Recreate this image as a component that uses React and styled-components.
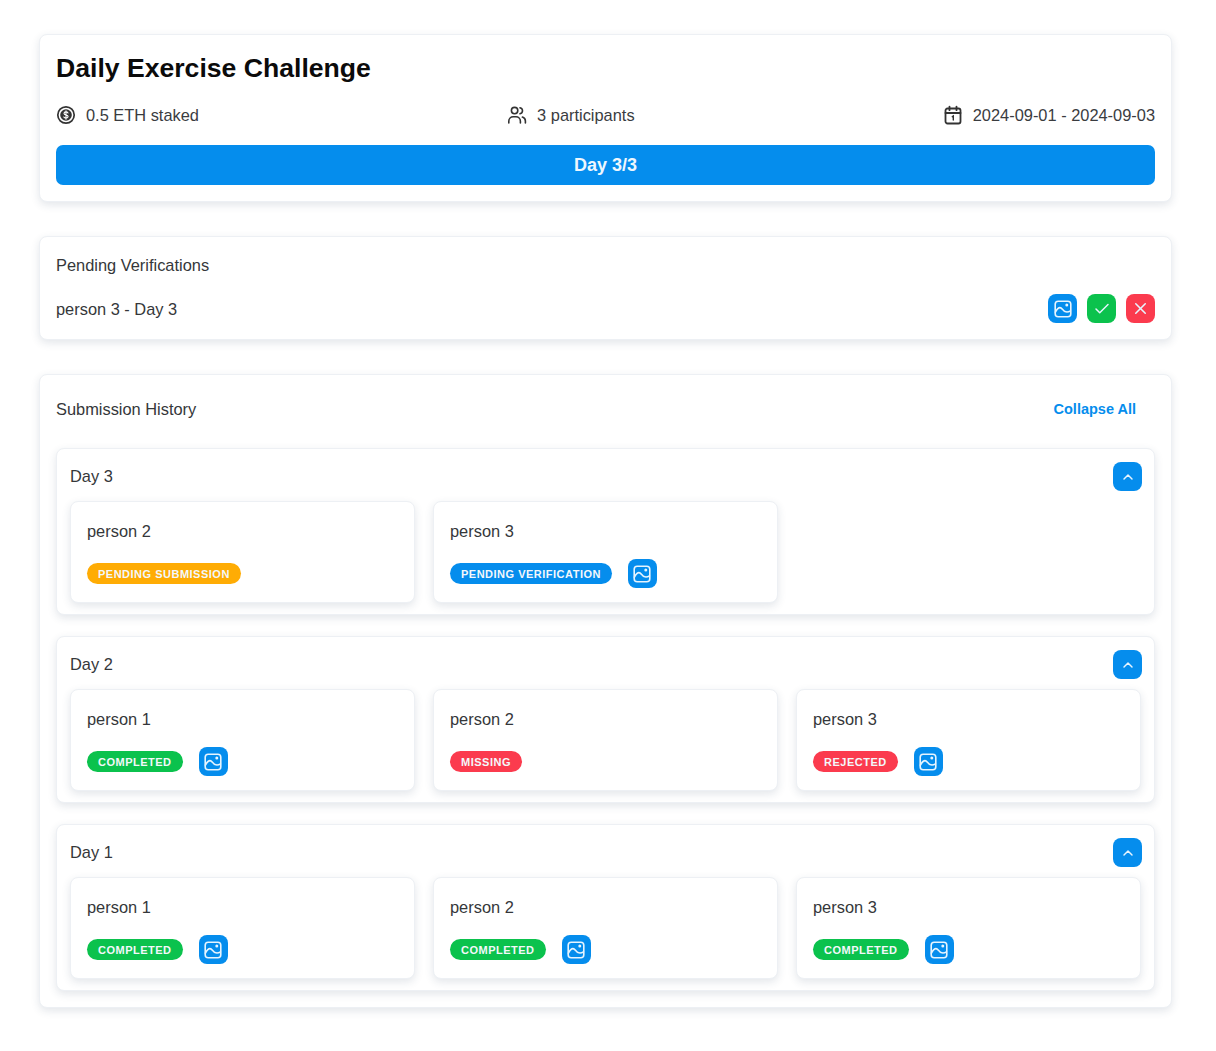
import styled, { createGlobalStyle } from 'styled-components';
import { Check, ChevronUp, X } from 'lucide-react';

const GlobalStyle = createGlobalStyle`
  html, body {
    margin: 0;
    padding: 0;
    background: #ffffff;
    font-family: "Liberation Sans", Arial, sans-serif;
    color: #2f3133;
  }
  * {
    box-sizing: border-box;
  }
`;

const colors = {
  blue: '#058ded',
  green: '#0bc24d',
  red: '#fb3b4e',
  orange: '#ffac04',
};

const Page = styled.div`
  width: 1216px;
  height: 1051px;
  padding: 34px 44px 0 39px;
  display: flex;
  flex-direction: column;
  gap: 34px;
`;

const Card = styled.section`
  background: #fff;
  border: 1px solid #edf0f4;
  border-radius: 8px;
  padding: ${(p) => p.$padding || '16px'};
  box-shadow: 0 3px 9px rgba(40, 60, 90, 0.13);
`;

const Title = styled.h1`
  margin: 0;
  height: 36px;
  line-height: 35px;
  font-size: 26.6px;
  font-weight: 700;
  color: #0b0b0b;
`;

const MetaRow = styled.div`
  margin-top: 13px;
  height: 30px;
  display: flex;
  align-items: center;
  justify-content: space-between;
`;

const Meta = styled.div`
  display: flex;
  align-items: center;
  gap: 10px;
  font-size: 16.4px;
  color: #3a3c3f;
`;

const ProgressBar = styled.div`
  margin-top: 15px;
  height: 40px;
  border-radius: 7px;
  background: ${colors.blue};
  color: #eef7fe;
  font-size: 18px;
  font-weight: 700;
  display: flex;
  align-items: center;
  justify-content: center;
`;

const SectionLabel = styled.div`
  font-size: 16.4px;
  line-height: 20px;
  color: #35373a;
`;

const DayLabel = styled(SectionLabel)`
  margin-bottom: 2px;
`;

const PendingRow = styled.div`
  margin-top: 19px;
  display: flex;
  align-items: center;
  justify-content: space-between;
`;

const ButtonGroup = styled.div`
  display: flex;
  gap: 10px;
`;

const IconButton = styled.button`
  width: 29px;
  height: 29px;
  padding: 0;
  border: none;
  border-radius: 8px;
  background: ${(p) => p.$color || colors.blue};
  color: #e6f4fe;
  display: flex;
  align-items: center;
  justify-content: center;
  flex-shrink: 0;
`;

const HistoryHeader = styled.div`
  height: 36px;
  padding-right: 19px;
  display: flex;
  align-items: center;
  justify-content: space-between;
`;

const CollapseAll = styled.span`
  font-size: 14.5px;
  font-weight: 700;
  color: ${colors.blue};
`;

const DayList = styled.div`
  margin-top: 21px;
  display: flex;
  flex-direction: column;
  gap: 21.2px;
`;

const DayHeader = styled.div`
  height: 29px;
  margin-right: -1px;
  display: flex;
  align-items: center;
  justify-content: space-between;
`;

const DayGrid = styled.div`
  margin-top: 10px;
  display: grid;
  grid-template-columns: repeat(3, 1fr);
  gap: 18px;
`;

const PersonCard = styled(Card)`
  height: 102px;
  padding: 20px 16px 0;
`;

const PersonName = styled.div`
  font-size: 16.4px;
  line-height: 19px;
  color: #35373a;
`;

const StatusRow = styled.div`
  margin-top: 18px;
  min-height: 29px;
  display: flex;
  align-items: center;
  gap: 16px;
`;

const Badge = styled.span`
  height: 21px;
  padding: 0 11px;
  border-radius: 11px;
  background: ${(p) => p.$color};
  color: #f3f8fb;
  font-size: 11px;
  font-weight: 700;
  letter-spacing: 0.5px;
  display: inline-flex;
  align-items: center;
`;

const DollarIcon = () => (
  <svg width="20" height="20" viewBox="0 0 20 20" fill="none">
    <circle cx="10" cy="10" r="8.2" stroke="#333" strokeWidth="1.7" />
    <circle cx="10" cy="10" r="5.8" fill="#333" />
    <path d="M12 7.900c-.4-.7-1.100-1-2-1-1.100 0-2 .5-2 1.500 0 2.200 4.100 1 4.100 3.200 0 1-.9 1.500-2.100 1.500-1 0-1.800-.4-2.200-1.100M10 5.800v8.400" stroke="#fff" strokeWidth="1.1" strokeLinecap="round" />
  </svg>
);

const UsersIcon = () => (
  <svg width="20" height="20" viewBox="0 0 20 20" fill="none" stroke="#333" strokeWidth="1.6" strokeLinecap="round">
    <circle cx="7.600" cy="5.600" r="3.200" />
    <path d="M1.800 18v-1.800c0-2.600 2-4.400 4.400-4.400h2.800c2.400 0 4.400 1.800 4.400 4.400V18" />
    <path d="M13 2.700c1.500.4 2.500 1.600 2.500 3s-1 2.600-2.500 3" />
    <path d="M15.400 12.100c1.800.5 3 2.100 3 4V18" />
  </svg>
);

const CalendarIcon = () => (
  <svg width="20" height="20" viewBox="0 0 20 20" fill="none" stroke="#333" strokeWidth="1.800" strokeLinecap="round">
    <rect x="2.500" y="3.500" width="15" height="15" rx="2" />
    <path d="M6.500 1.600v3.600M13.500 1.600v3.600M2.500 8h15" />
    <path d="M9.300 11.700l1-.6v4" strokeWidth="1.400" />
  </svg>
);

const ImageIcon = () => (
  <svg width="20" height="20" viewBox="0 0 20 20" fill="none" stroke="currentColor" strokeWidth="1.600" strokeLinecap="round" strokeLinejoin="round">
    <rect x="2.200" y="2.200" width="15.600" height="15.600" rx="3" />
    <path d="M2.400 13.200c1.400-2.800 3-4.600 4.600-4.600 1.800 0 3 3 5 4 2 .9 3.800.3 5.400-.6" />
    <circle cx="13.800" cy="6" r="0.700" />
  </svg>
);

const days = [
  {
    label: 'Day 3',
    entries: [
      { name: 'person 2', status: 'PENDING SUBMISSION', color: colors.orange },
      { name: 'person 3', status: 'PENDING VERIFICATION', color: colors.blue, image: true },
    ],
  },
  {
    label: 'Day 2',
    entries: [
      { name: 'person 1', status: 'COMPLETED', color: colors.green, image: true },
      { name: 'person 2', status: 'MISSING', color: colors.red },
      { name: 'person 3', status: 'REJECTED', color: colors.red, image: true },
    ],
  },
  {
    label: 'Day 1',
    entries: [
      { name: 'person 1', status: 'COMPLETED', color: colors.green, image: true },
      { name: 'person 2', status: 'COMPLETED', color: colors.green, image: true },
      { name: 'person 3', status: 'COMPLETED', color: colors.green, image: true },
    ],
  },
];

const App = () => {
  return (
    <Page>
      <GlobalStyle />

      <Card>
        <Title>Daily Exercise Challenge</Title>
        <MetaRow>
          <Meta><DollarIcon />0.5 ETH staked</Meta>
          <Meta><UsersIcon />3 participants</Meta>
          <Meta><CalendarIcon />2024-09-01 - 2024-09-03</Meta>
        </MetaRow>
        <ProgressBar>Day 3/3</ProgressBar>
      </Card>

      <Card $padding="18px 16px 16px">
        <SectionLabel>Pending Verifications</SectionLabel>
        <PendingRow>
          <SectionLabel>person 3 - Day 3</SectionLabel>
          <ButtonGroup>
            <IconButton><ImageIcon /></IconButton>
            <IconButton $color={colors.green}><Check size={18} strokeWidth={2} /></IconButton>
            <IconButton $color={colors.red}><X size={19} strokeWidth={2} /></IconButton>
          </ButtonGroup>
        </PendingRow>
      </Card>

      <Card>
        <HistoryHeader>
          <SectionLabel>Submission History</SectionLabel>
          <CollapseAll>Collapse All</CollapseAll>
        </HistoryHeader>
        <DayList>
          {days.map((day) => (
            <Card key={day.label} $padding="13px 13px 11px 13px">
              <DayHeader>
                <DayLabel>{day.label}</DayLabel>
                <IconButton><ChevronUp size={16} strokeWidth={2.2} /></IconButton>
              </DayHeader>
              <DayGrid>
                {day.entries.map((entry) => (
                  <PersonCard key={entry.name}>
                    <PersonName>{entry.name}</PersonName>
                    <StatusRow>
                      <Badge $color={entry.color}>{entry.status}</Badge>
                      {entry.image && <IconButton><ImageIcon /></IconButton>}
                    </StatusRow>
                  </PersonCard>
                ))}
              </DayGrid>
            </Card>
          ))}
        </DayList>
      </Card>
    </Page>
  );
};

export default App;
